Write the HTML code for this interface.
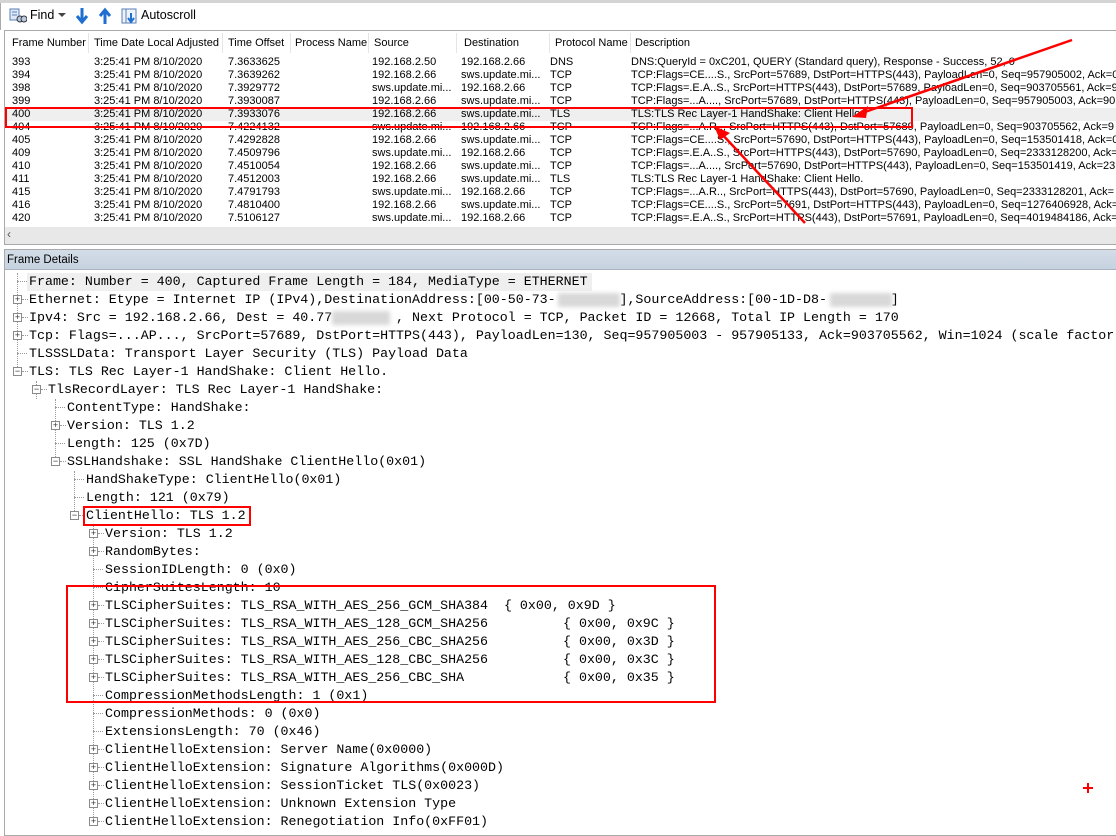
<!DOCTYPE html>
<html><head><meta charset="utf-8"><style>
*{margin:0;padding:0;box-sizing:border-box}
body{width:1116px;height:836px;background:#fff;position:relative;overflow:hidden;font-family:"Liberation Sans",sans-serif}
.a{position:absolute;white-space:pre}
.ls{font-size:11px;color:#000}
.m{font-family:"Liberation Mono",monospace;font-size:13.3px;color:#000;line-height:18px}
.bx{position:absolute;width:9px;height:9px;border:1px solid #8a8a8a;background:#fff;font:9px/7px "Liberation Sans";text-align:center;color:#333}
.hl{position:absolute;border-top:1px dotted #999;height:0}
.vl{position:absolute;border-left:1px dotted #999;width:0}
.blur{position:absolute;background:#d8d8d8;filter:blur(2px)}
</style></head><body>
<div class="a" style="left:0;top:0;width:1116px;height:3px;background:#d4d4d4"></div>
<div class="a" style="left:0;top:3px;width:1116px;height:27px;background:#fff;border-left:1px solid #aaa"></div>
<svg class="a" style="left:9px;top:8px" width="18" height="16"><rect x="1" y="1" width="9" height="11" fill="#dfe8f5" stroke="#5a7fb5"/><line x1="3" y1="4" x2="8" y2="4" stroke="#5a7fb5"/><line x1="3" y1="7" x2="8" y2="7" stroke="#5a7fb5"/><circle cx="11" cy="11" r="3" fill="#bcd" stroke="#334"/><circle cx="15" cy="11" r="3" fill="#bcd" stroke="#334"/></svg>
<div class="a" style="left:30px;top:8px;font-size:12.5px">Find</div>
<div class="a" style="left:58px;top:13px;width:0;height:0;border-left:4px solid transparent;border-right:4px solid transparent;border-top:4px solid #444"></div>
<svg class="a" style="left:75px;top:7px" width="14" height="18"><path d="M7 1 V14 M2 9 L7 15 L12 9" stroke="#1e6fd0" stroke-width="3" fill="none"/></svg>
<svg class="a" style="left:98px;top:7px" width="14" height="18"><path d="M7 17 V4 M2 9 L7 3 L12 9" stroke="#1e6fd0" stroke-width="3" fill="none"/></svg>
<svg class="a" style="left:121px;top:8px" width="18" height="16"><rect x="1" y="1" width="14" height="14" fill="#eef3fb" stroke="#5a7fb5"/><line x1="5" y1="1" x2="5" y2="15" stroke="#5a7fb5"/><path d="M10 5 V13 M7 10 L10 14 L13 10" stroke="#1e6fd0" stroke-width="2" fill="none"/></svg>
<div class="a" style="left:141px;top:8px;font-size:12.5px">Autoscroll</div>
<div class="a" style="left:4px;top:30px;width:1112px;height:215px;border:1px solid #aaa;border-right:none;background:#fff"></div>
<div class="a ls" style="left:12px;top:37px">Frame Number</div>
<div class="a ls" style="left:94px;top:37px">Time Date Local Adjusted</div>
<div class="a ls" style="left:228px;top:37px">Time Offset</div>
<div class="a ls" style="left:295px;top:37px">Process Name</div>
<div class="a ls" style="left:374px;top:37px">Source</div>
<div class="a ls" style="left:464px;top:37px">Destination</div>
<div class="a ls" style="left:555px;top:37px">Protocol Name</div>
<div class="a ls" style="left:635px;top:37px">Description</div>
<div class="a" style="left:88px;top:33px;width:1px;height:20px;background:#e5e5e5"></div>
<div class="a" style="left:222px;top:33px;width:1px;height:20px;background:#e5e5e5"></div>
<div class="a" style="left:290px;top:33px;width:1px;height:20px;background:#e5e5e5"></div>
<div class="a" style="left:368px;top:33px;width:1px;height:20px;background:#e5e5e5"></div>
<div class="a" style="left:456px;top:33px;width:1px;height:20px;background:#e5e5e5"></div>
<div class="a" style="left:549px;top:33px;width:1px;height:20px;background:#e5e5e5"></div>
<div class="a" style="left:630px;top:33px;width:1px;height:20px;background:#e5e5e5"></div>
<div class="a" style="left:5px;top:108px;width:1111px;height:13px;background:#efefef"></div>
<div class="a ls" style="left:12px;top:56px;line-height:13px">393
394
398
399
400
404
405
409
410
411
415
416
420</div>
<div class="a ls" style="left:94px;top:56px;line-height:13px">3:25:41 PM 8/10/2020
3:25:41 PM 8/10/2020
3:25:41 PM 8/10/2020
3:25:41 PM 8/10/2020
3:25:41 PM 8/10/2020
3:25:41 PM 8/10/2020
3:25:41 PM 8/10/2020
3:25:41 PM 8/10/2020
3:25:41 PM 8/10/2020
3:25:41 PM 8/10/2020
3:25:41 PM 8/10/2020
3:25:41 PM 8/10/2020
3:25:41 PM 8/10/2020</div>
<div class="a ls" style="left:228px;top:56px;line-height:13px">7.3633625
7.3639262
7.3929772
7.3930087
7.3933076
7.4224132
7.4292828
7.4509796
7.4510054
7.4512003
7.4791793
7.4810400
7.5106127</div>
<div class="a ls" style="left:372px;top:56px;line-height:13px">192.168.2.50
192.168.2.66
sws.update.mi...
192.168.2.66
192.168.2.66
sws.update.mi...
192.168.2.66
sws.update.mi...
192.168.2.66
192.168.2.66
sws.update.mi...
192.168.2.66
sws.update.mi...</div>
<div class="a ls" style="left:461px;top:56px;line-height:13px">192.168.2.66
sws.update.mi...
192.168.2.66
sws.update.mi...
sws.update.mi...
192.168.2.66
sws.update.mi...
192.168.2.66
sws.update.mi...
sws.update.mi...
192.168.2.66
sws.update.mi...
192.168.2.66</div>
<div class="a ls" style="left:550px;top:56px;line-height:13px">DNS
TCP
TCP
TCP
TLS
TCP
TCP
TCP
TCP
TLS
TCP
TCP
TCP</div>
<div class="a ls" style="left:631px;top:56px;line-height:13px;width:485px;overflow:hidden">DNS:QueryId = 0xC201, QUERY (Standard query), Response - Success, 52, 0
TCP:Flags=CE....S., SrcPort=57689, DstPort=HTTPS(443), PayloadLen=0, Seq=957905002, Ack=0
TCP:Flags=.E.A..S., SrcPort=HTTPS(443), DstPort=57689, PayloadLen=0, Seq=903705561, Ack=9
TCP:Flags=...A...., SrcPort=57689, DstPort=HTTPS(443), PayloadLen=0, Seq=957905003, Ack=90
TLS:TLS Rec Layer-1 HandShake: Client Hello.
TCP:Flags=...A.R.., SrcPort=HTTPS(443), DstPort=57689, PayloadLen=0, Seq=903705562, Ack=9
TCP:Flags=CE....S., SrcPort=57690, DstPort=HTTPS(443), PayloadLen=0, Seq=153501418, Ack=0
TCP:Flags=.E.A..S., SrcPort=HTTPS(443), DstPort=57690, PayloadLen=0, Seq=2333128200, Ack=
TCP:Flags=...A...., SrcPort=57690, DstPort=HTTPS(443), PayloadLen=0, Seq=153501419, Ack=23
TLS:TLS Rec Layer-1 HandShake: Client Hello.
TCP:Flags=...A.R.., SrcPort=HTTPS(443), DstPort=57690, PayloadLen=0, Seq=2333128201, Ack=
TCP:Flags=CE....S., SrcPort=57691, DstPort=HTTPS(443), PayloadLen=0, Seq=1276406928, Ack=
TCP:Flags=.E.A..S., SrcPort=HTTPS(443), DstPort=57691, PayloadLen=0, Seq=4019484186, Ack=</div>
<div class="a" style="left:5px;top:227px;width:1111px;height:17px;background:#e8e8e8"></div>
<div class="a" style="left:7px;top:227px;font-size:12px;color:#555">‹</div>
<div class="a" style="left:4px;top:249px;width:1112px;height:587px;border:1px solid #aaa;border-right:none"></div>
<div class="a" style="left:5px;top:250px;width:1111px;height:20px;background:linear-gradient(#d3dde8,#c6d2df);border-bottom:1px solid #a8b4c0"></div>
<div class="a" style="left:7px;top:254px;font-size:11.5px">Frame Details</div>
<div class="a" style="left:27px;top:273px;width:565px;height:18px;background:#efefef"></div>
<div class="vl" style="left:17px;top:273px;height:100px"></div>
<div class="vl" style="left:36px;top:381px;height:18px"></div>
<div class="vl" style="left:55px;top:399px;height:64px"></div>
<div class="vl" style="left:74px;top:471px;height:46px"></div>
<div class="vl" style="left:93px;top:525px;height:300px"></div>
<div id="tree"></div>
<div class="blur" style="left:558px;top:293px;width:62px;height:14px"></div>
<div class="blur" style="left:830px;top:293px;width:62px;height:14px"></div>
<div class="blur" style="left:332px;top:311px;width:58px;height:14px"></div>
<div class="a" style="left:5px;top:107px;width:908px;height:21px;border:2px solid #f00"></div>
<div class="a" style="left:83px;top:506px;width:168px;height:20px;border:2px solid #f00"></div>
<div class="a" style="left:66px;top:585px;width:650px;height:118px;border:2px solid #f00"></div>
<svg class="a" style="left:0;top:0" width="1116" height="836">
<line x1="1072" y1="40" x2="862" y2="113" stroke="#f00" stroke-width="2.5"/>
<path d="M852 117 L868 106 L866 118 Z" fill="#f00"/>
<line x1="805" y1="223" x2="720" y2="132" stroke="#f00" stroke-width="2.5"/>
<path d="M714 126 L730 133 L720 140 Z" fill="#f00"/>
<path d="M1083 788 H1093 M1088 783 V793" stroke="#f00" stroke-width="2"/>
</svg>
<script>
var rows=[
[0,0,"Frame: Number = 400, Captured Frame Length = 184, MediaType = ETHERNET"],
[0,1,"Ethernet: Etype = Internet IP (IPv4),DestinationAddress:[00-50-73-        ],SourceAddress:[00-1D-D8-        ]"],
[0,1,"Ipv4: Src = 192.168.2.66, Dest = 40.77.       , Next Protocol = TCP, Packet ID = 12668, Total IP Length = 170"],
[0,1,"Tcp: Flags=...AP..., SrcPort=57689, DstPort=HTTPS(443), PayloadLen=130, Seq=957905003 - 957905133, Ack=903705562, Win=1024 (scale factor"],
[0,0,"TLSSSLData: Transport Layer Security (TLS) Payload Data"],
[0,2,"TLS: TLS Rec Layer-1 HandShake: Client Hello."],
[1,2,"TlsRecordLayer: TLS Rec Layer-1 HandShake:"],
[2,0,"ContentType: HandShake:"],
[2,1,"Version: TLS 1.2"],
[2,0,"Length: 125 (0x7D)"],
[2,2,"SSLHandshake: SSL HandShake ClientHello(0x01)"],
[3,0,"HandShakeType: ClientHello(0x01)"],
[3,0,"Length: 121 (0x79)"],
[3,2,"ClientHello: TLS 1.2"],
[4,1,"Version: TLS 1.2"],
[4,1,"RandomBytes:"],
[4,0,"SessionIDLength: 0 (0x0)"],
[4,0,"CipherSuitesLength: 10"],
[4,1,"TLSCipherSuites: TLS_RSA_WITH_AES_256_GCM_SHA384  { 0x00, 0x9D }"],
[4,1,"TLSCipherSuites: TLS_RSA_WITH_AES_128_GCM_SHA256","{ 0x00, 0x9C }"],
[4,1,"TLSCipherSuites: TLS_RSA_WITH_AES_256_CBC_SHA256","{ 0x00, 0x3D }"],
[4,1,"TLSCipherSuites: TLS_RSA_WITH_AES_128_CBC_SHA256","{ 0x00, 0x3C }"],
[4,1,"TLSCipherSuites: TLS_RSA_WITH_AES_256_CBC_SHA","{ 0x00, 0x35 }"],
[4,0,"CompressionMethodsLength: 1 (0x1)"],
[4,0,"CompressionMethods: 0 (0x0)"],
[4,0,"ExtensionsLength: 70 (0x46)"],
[4,1,"ClientHelloExtension: Server Name(0x0000)"],
[4,1,"ClientHelloExtension: Signature Algorithms(0x000D)"],
[4,1,"ClientHelloExtension: SessionTicket TLS(0x0023)"],
[4,1,"ClientHelloExtension: Unknown Extension Type"],
[4,1,"ClientHelloExtension: Renegotiation Info(0xFF01)"]];
var h="";
rows.forEach(function(r,i){
 var top=273+18*i, tx=29+19*r[0], bx=tx-16;
 if(r[1]){h+='<div class="bx" style="left:'+bx+'px;top:'+(top+4)+'px">'+(r[1]==1?'+':'−')+'</div><div class="hl" style="left:'+(bx+9)+'px;top:'+(top+8)+'px;width:6px"></div>';}
 else h+='<div class="hl" style="left:'+(bx+4)+'px;top:'+(top+8)+'px;width:10px"></div>';
 h+='<div class="a m" style="left:'+tx+'px;top:'+top+'px">'+r[2]+'</div>';
 if(r[3])h+='<div class="a m" style="left:563px;top:'+top+'px">'+r[3]+'</div>';
});
document.getElementById('tree').innerHTML=h;
</script>
</body></html>
